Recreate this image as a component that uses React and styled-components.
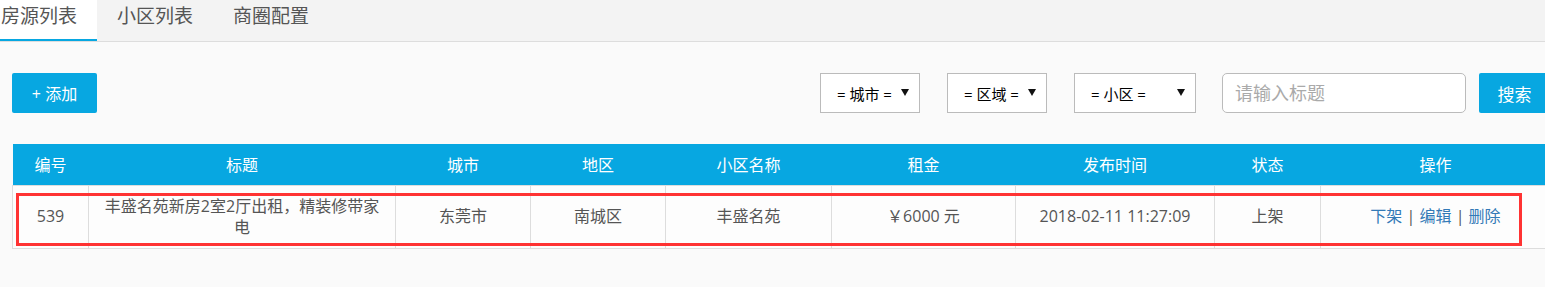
import React from "react";
import styled, { createGlobalStyle } from "styled-components";

const GlobalStyle = createGlobalStyle`
  html, body {
    margin: 0;
    padding: 0;
    background: #fafafa;
    overflow: hidden;
  }
  body {
    font-family: "Open Sans", "Noto Sans CJK SC", sans-serif;
    color: #555;
  }
  * {
    box-sizing: border-box;
  }
`;

const BLUE = "#07a7e1";

const Page = styled.div`
  width: 1545px;
  height: 287px;
  overflow: hidden;
`;

const TabBar = styled.ul`
  display: flex;
  margin: 0;
  padding: 0;
  list-style: none;
  height: 42px;
  background: #f3f3f3;
  border-bottom: 1px solid #ddd;
`;

const Tab = styled.li`
  height: 41px;
  padding: 0 20px;
  font-size: 19px;
  line-height: 32px;
  color: #555;
  cursor: pointer;
  background: ${(p) => (p.$active ? "#fff" : "transparent")};
  border-bottom: 2px solid ${(p) => (p.$active ? BLUE : "transparent")};

  &:first-child {
    padding-left: 1px;
  }
`;

const Main = styled.div`
  width: 1550px;
  padding: 31px 0 0 12px;
`;

const Toolbar = styled.div`
  display: flex;
  align-items: center;
  justify-content: space-between;
  height: 40px;
  margin-bottom: 31px;
`;

const Button = styled.button`
  height: 40px;
  width: ${(p) => p.$width}px;
  margin-left: ${(p) => p.$gap || 0}px;
  padding: 0;
  border: none;
  border-radius: 2px;
  background: ${BLUE};
  color: #fff;
  font-family: inherit;
  font-size: ${(p) => p.$size || 16}px;
  cursor: pointer;
`;

const Filters = styled.div`
  display: flex;
  align-items: center;
`;

const SelectBox = styled.div`
  display: flex;
  align-items: center;
  justify-content: space-between;
  width: ${(p) => p.$width}px;
  height: 40px;
  margin-left: ${(p) => p.$gap || 0}px;
  padding: 0 10px 0 16px;
  border: 1px solid #bbb;
  background: #fff;
  color: #000;
  font-size: 15px;
  white-space: pre;
`;

const Arrow = styled.span`
  width: 0;
  height: 0;
  margin-top: -2px;
  border-left: 4px solid transparent;
  border-right: 4px solid transparent;
  border-top: 7px solid #111;
`;

const SearchInput = styled.input`
  width: 244px;
  height: 40px;
  margin-left: 26px;
  padding: 0 12px;
  border: 1px solid #bbb;
  border-radius: 5px;
  background: #fff;
  font-family: inherit;
  font-size: 18px;
  color: #333;
  outline: none;

  &::placeholder {
    color: #aaa;
  }
`;

const TableWrap = styled.div`
  position: relative;
  width: 1538px;
`;

const Table = styled.table`
  width: 1538px;
  border-collapse: collapse;
  table-layout: fixed;
`;

const Th = styled.th`
  height: 41px;
  padding: 0 8px;
  background: ${BLUE};
  color: #fff;
  font-size: 16px;
  font-weight: normal;
  text-align: center;
`;

const Td = styled.td`
  height: 63px;
  padding: 8px;
  border: 1px solid #ddd;
  background: #fdfdfd;
  color: #555;
  font-size: 16px;
  line-height: 21px;
  text-align: center;
`;

const Link = styled.a`
  color: #337ab7;
  text-decoration: none;
  cursor: pointer;
`;

const Highlight = styled.div`
  position: absolute;
  left: 4px;
  top: 49px;
  width: 1506px;
  height: 53px;
  border: 3px solid #f33;
  pointer-events: none;
`;

const columns = [
  { title: "编号", width: 76 },
  { title: "标题", width: 307 },
  { title: "城市", width: 135 },
  { title: "地区", width: 135 },
  { title: "小区名称", width: 166 },
  { title: "租金", width: 184 },
  { title: "发布时间", width: 199 },
  { title: "状态", width: 106 },
  { title: "操作", width: 230 },
];

const houses = [
  {
    id: 539,
    title: "丰盛名苑新房2室2厅出租，精装修带家电",
    city: "东莞市",
    region: "南城区",
    community: "丰盛名苑",
    rent: "￥6000 元",
    time: "2018-02-11 11:27:09",
    status: "上架",
  },
];

export default function App() {
  return (
    <Page>
      <GlobalStyle />
      <TabBar>
        <Tab $active>房源列表</Tab>
        <Tab>小区列表</Tab>
        <Tab>商圈配置</Tab>
      </TabBar>
      <Main>
        <Toolbar>
          <Button $width={85}>+ 添加</Button>
          <Filters>
            <SelectBox $width={100}>
              {"= 城市 ="}
              <Arrow />
            </SelectBox>
            <SelectBox $width={100} $gap={27}>
              {"= 区域 ="}
              <Arrow />
            </SelectBox>
            <SelectBox $width={122} $gap={27}>
              {"= 小区 ="}
              <Arrow />
            </SelectBox>
            <SearchInput placeholder="请输入标题" />
            <Button $width={71} $gap={13} $size={17}>
              搜索
            </Button>
          </Filters>
        </Toolbar>
        <TableWrap>
          <Table>
            <colgroup>
              {columns.map((c) => (
                <col key={c.title} style={{ width: c.width }} />
              ))}
            </colgroup>
            <thead>
              <tr>
                {columns.map((c) => (
                  <Th key={c.title}>{c.title}</Th>
                ))}
              </tr>
            </thead>
            <tbody>
              {houses.map((h) => (
                <tr key={h.id}>
                  <Td>{h.id}</Td>
                  <Td>{h.title}</Td>
                  <Td>{h.city}</Td>
                  <Td>{h.region}</Td>
                  <Td>{h.community}</Td>
                  <Td>{h.rent}</Td>
                  <Td>{h.time}</Td>
                  <Td>{h.status}</Td>
                  <Td>
                    <Link>下架</Link> | <Link>编辑</Link> | <Link>删除</Link>
                  </Td>
                </tr>
              ))}
            </tbody>
          </Table>
          <Highlight />
        </TableWrap>
      </Main>
    </Page>
  );
}
